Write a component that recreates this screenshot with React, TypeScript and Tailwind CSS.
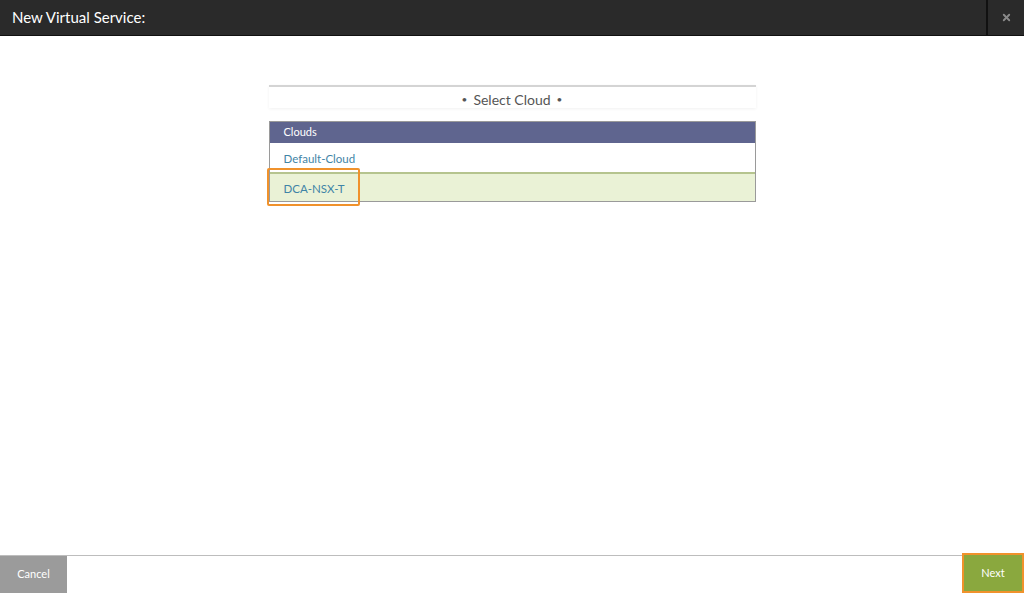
import { X } from 'lucide-react';

const clouds = ['Default-Cloud', 'DCA-NSX-T'];

export default function App() {
    return (
        <div className="h-[593px] w-full flex flex-col bg-white font-['Lato','Liberation_Sans',sans-serif] overflow-hidden">
            {/* Header */}
            <div className="h-9 flex items-stretch bg-[#2a2a2a] border-b border-[#111]">
                <div className="flex-1 flex items-center px-3 text-white text-[15px]">New Virtual Service:</div>
                <div className="w-[38px] flex items-center justify-center border-l-2 border-[#111]">
                    <X size={11} strokeWidth={4} className="text-[#8a8a8a]" />
                </div>
            </div>

            {/* Body */}
            <div className="flex-1 flex justify-center pt-[49px]">
                <div className="w-[487px] flex flex-col">
                    <div className="h-[23px] pt-[3px] border-t-2 border-[#d4d4d4] shadow-[0_1px_3px_rgba(0,0,0,0.06)] flex items-center justify-center gap-[6px] text-[14px] text-[#555]">
                        <span className="text-[10px]">•</span>
                        <span>Select Cloud</span>
                        <span className="text-[10px]">•</span>
                    </div>
                    <div className="mt-[13px] border border-[#9a9a9a] relative">
                        <div className="h-[21px] bg-[#5f658f] text-white text-[11px] flex items-center px-[14px]">Clouds</div>
                        {clouds.map((c, i) => (
                            <div
                                key={c}
                                className={
                                    i === 1
                                        ? 'h-[29px] flex items-center px-[14px] pt-[2px] text-[11.5px] text-[#3f84a6] bg-[#eaf2d6] border-t-2 border-[#b5c48e]'
                                        : 'h-[29px] flex items-center px-[14px] pt-[2px] text-[11.5px] text-[#3f84a6] bg-white'
                                }
                            >
                                {c}
                            </div>
                        ))}
                        {/* highlight */}
                        <div className="absolute left-[-3px] top-[46px] w-[93px] h-[38px] border-2 border-[#f0922c] rounded-[2px]" />
                    </div>
                </div>
            </div>

            {/* Footer */}
            <div className="h-[38px] flex items-stretch border-t border-[#bdbdbd] relative">
                <div className="w-[67px] bg-[#9b9b9b] text-white text-[11px] flex items-center justify-center">Cancel</div>
                <div className="flex-1" />
                <div className="w-[62px] mt-[-3px] bg-[#8aa83e] border-2 border-[#f0922c] text-white text-[11px] flex items-center justify-center">Next</div>
            </div>
        </div>
    );
}
